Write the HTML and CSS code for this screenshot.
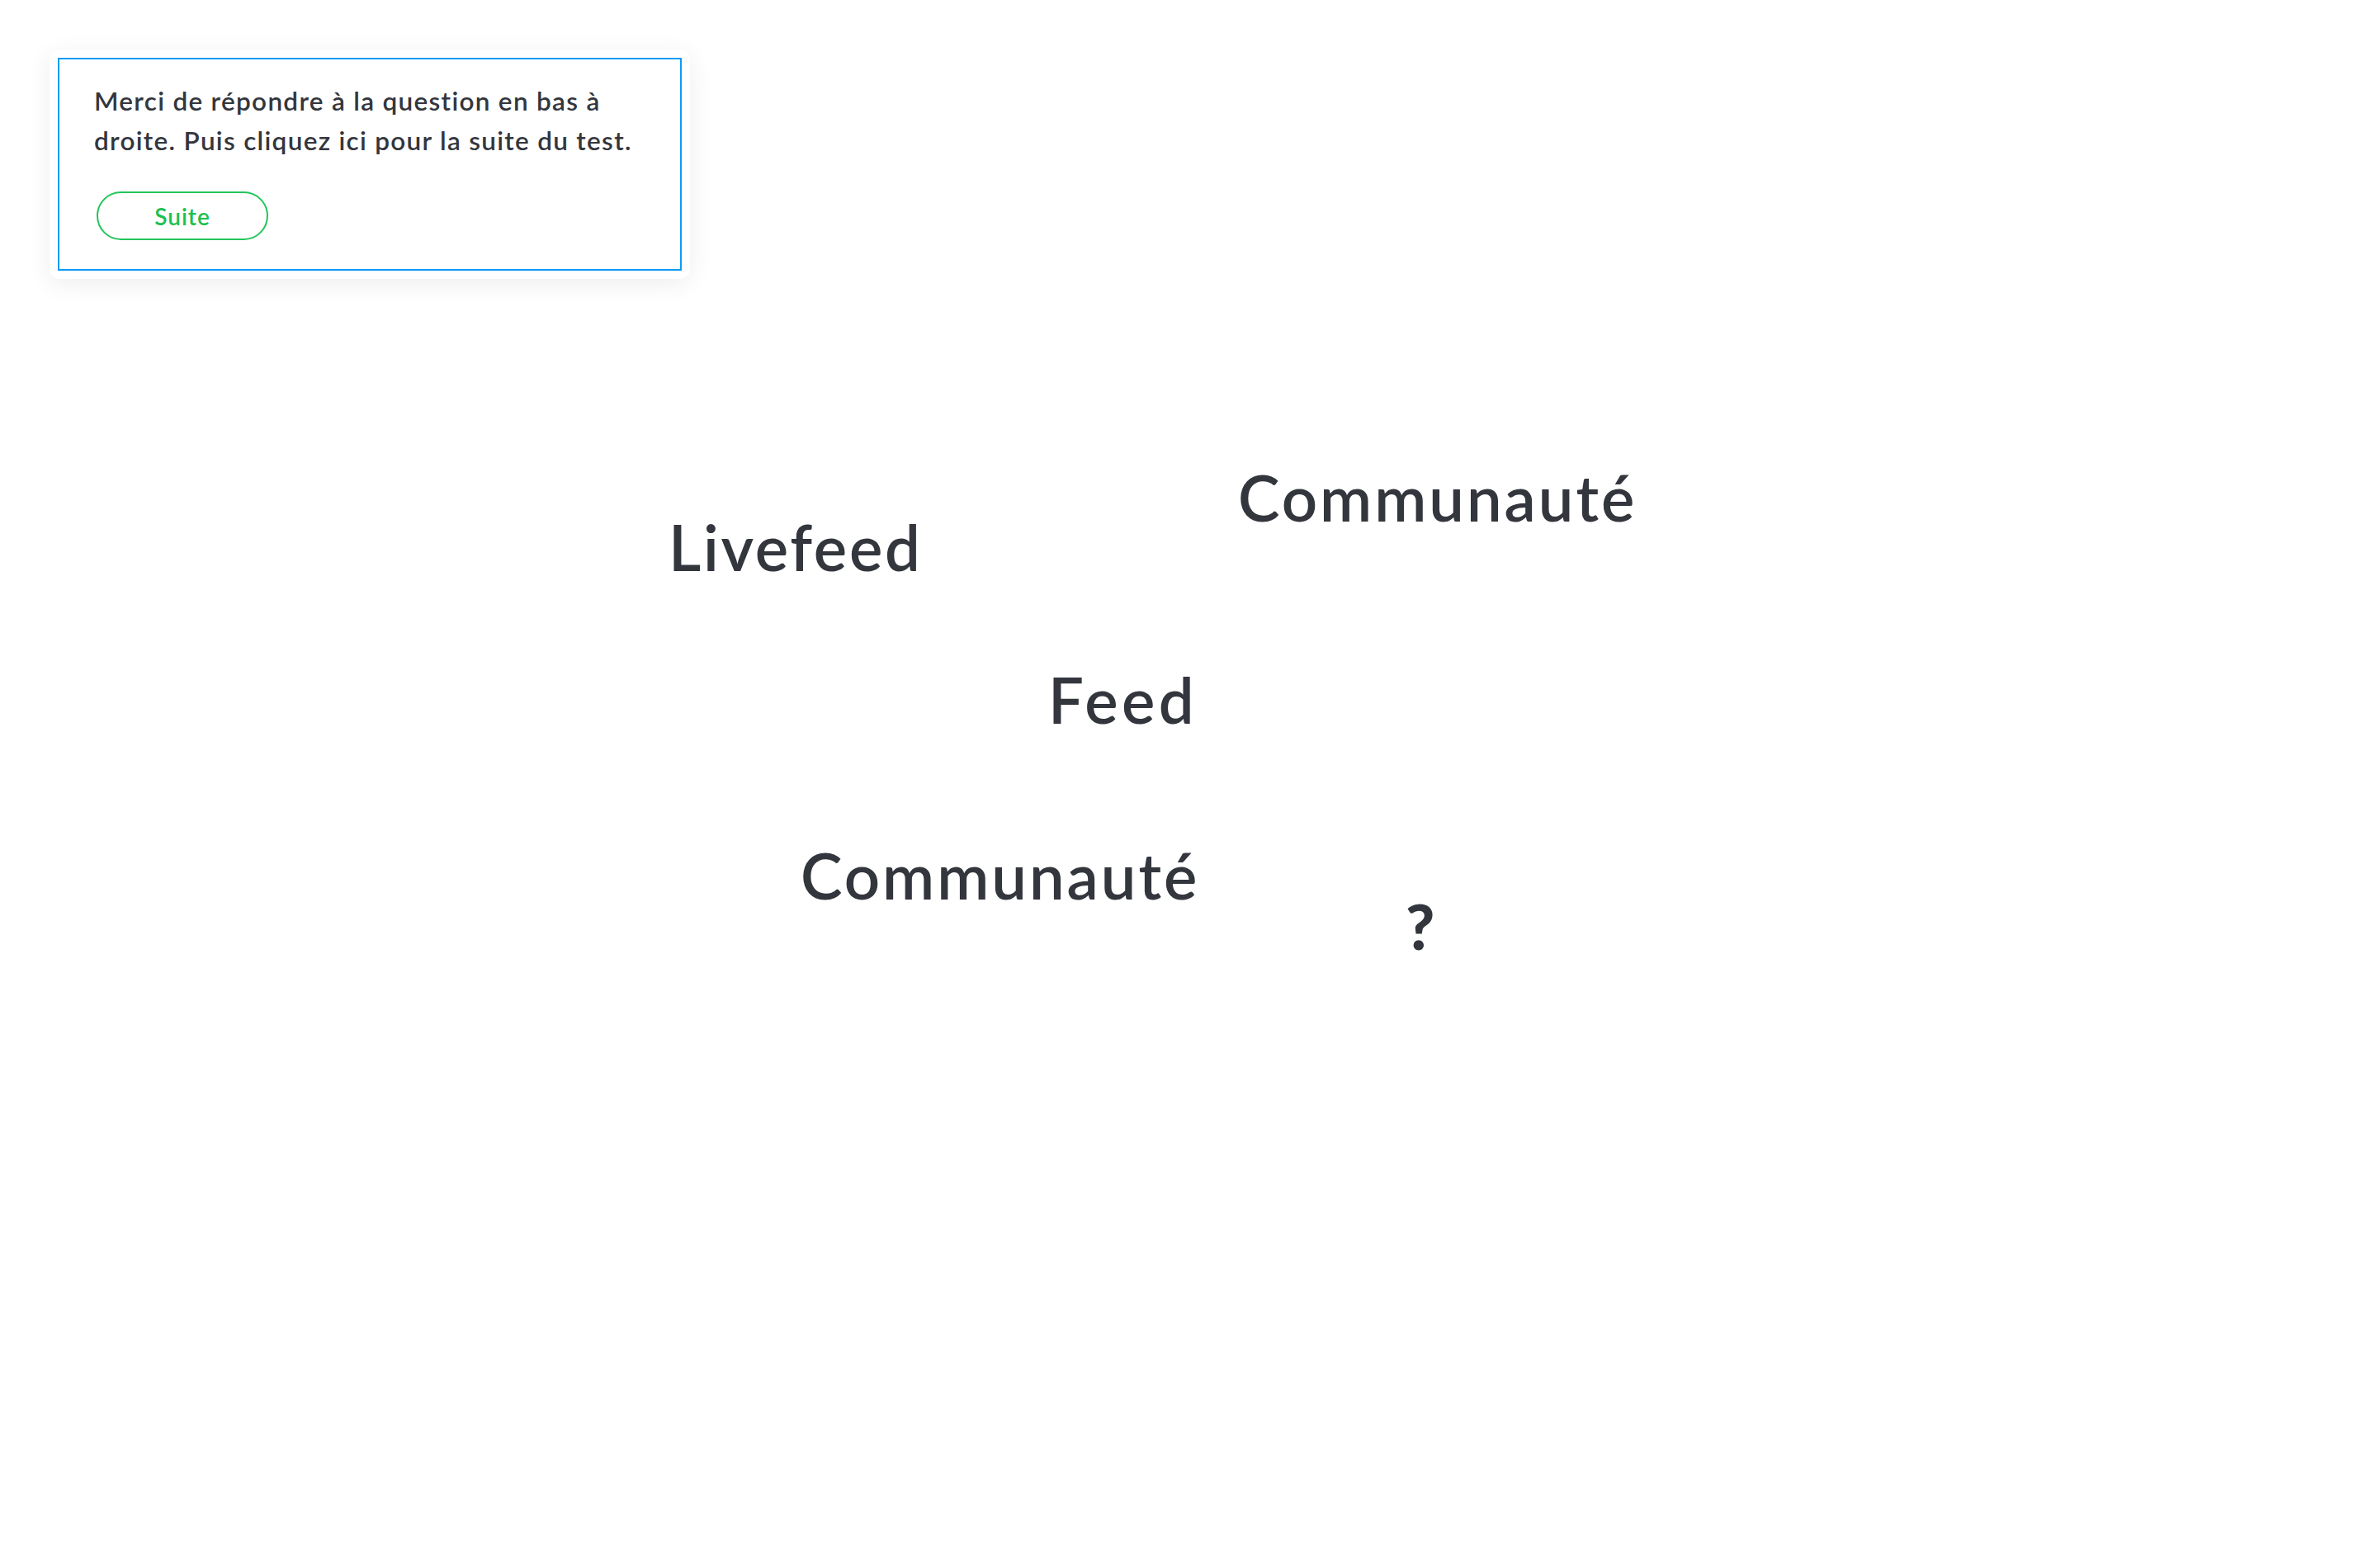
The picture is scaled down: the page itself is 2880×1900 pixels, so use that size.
FILE: index.html
```html
<!DOCTYPE html>
<html lang="fr">
<head>
<meta charset="utf-8">
<title>Test</title>
<link rel="stylesheet" href="styles.css">
</head>
<body>
<div class="page">
  <div class="card">
    <div class="task">
      <p class="task-text">Merci de répondre à la question en bas à droite. Puis cliquez ici pour la suite du test.</p>
      <button class="btn-next" type="button">Suite</button>
    </div>
  </div>
  <div class="canvas">
    <span class="word word-livefeed">Livefeed</span>
    <span class="word word-commu-top">Communauté</span>
    <span class="word word-feed">Feed</span>
    <span class="word word-commu-bottom">Communauté</span>
    <span class="word word-question">?</span>
  </div>
</div>
</body>
</html>
```

FILE: styles.css
```css
html, body {
  margin: 0;
  padding: 0;
  background: #ffffff;
}
body {
  font-family: "Lato", "Liberation Sans", sans-serif;
  color: #33363d;
}
.page {
  position: relative;
  width: 2880px;
  height: 1900px;
  padding: 60px 0 0 60px;
  box-sizing: border-box;
}
.card {
  width: 776px;
  box-sizing: border-box;
  padding: 10px;
  background: #ffffff;
  border-radius: 12px;
  box-shadow: 0 6px 30px rgba(0, 0, 0, 0.07);
}
.task {
  border: 2px solid #0c9cf4;
  padding: 26px 30px 35px 42px;
  display: flex;
  flex-direction: column;
  align-items: flex-start;
}
.task-text {
  margin: 0;
  font-size: 31.5px;
  line-height: 48px;
  font-weight: 600;
  letter-spacing: 1.3px;
  color: #33363d;
}
.btn-next {
  margin-top: 38px;
  margin-left: 3px;
  width: 208px;
  height: 59px;
  border: 2px solid #22c55a;
  border-radius: 30px;
  background: #ffffff;
  color: #1dbf50;
  font-family: "Lato", "Liberation Sans", sans-serif;
  font-size: 28px;
  font-weight: 600;
  letter-spacing: 1px;
  display: flex;
  align-items: center;
  justify-content: center;
  padding: 0;
}
.canvas {
  position: absolute;
  inset: 0;
  pointer-events: none;
}
.word {
  position: absolute;
  font-size: 76px;
  line-height: 1;
  font-weight: 600;
  letter-spacing: 3px;
  color: #33363d;
  white-space: nowrap;
}
.word-livefeed { left: 810px; top: 625px; letter-spacing: 2.7px; }
.word-commu-top { left: 1500px; top: 565px; }
.word-feed { left: 1270px; top: 810px; letter-spacing: 4.5px; }
.word-commu-bottom { left: 970px; top: 1023px; }
.word-question { left: 1703px; top: 1084px; font-weight: 900; }
```
